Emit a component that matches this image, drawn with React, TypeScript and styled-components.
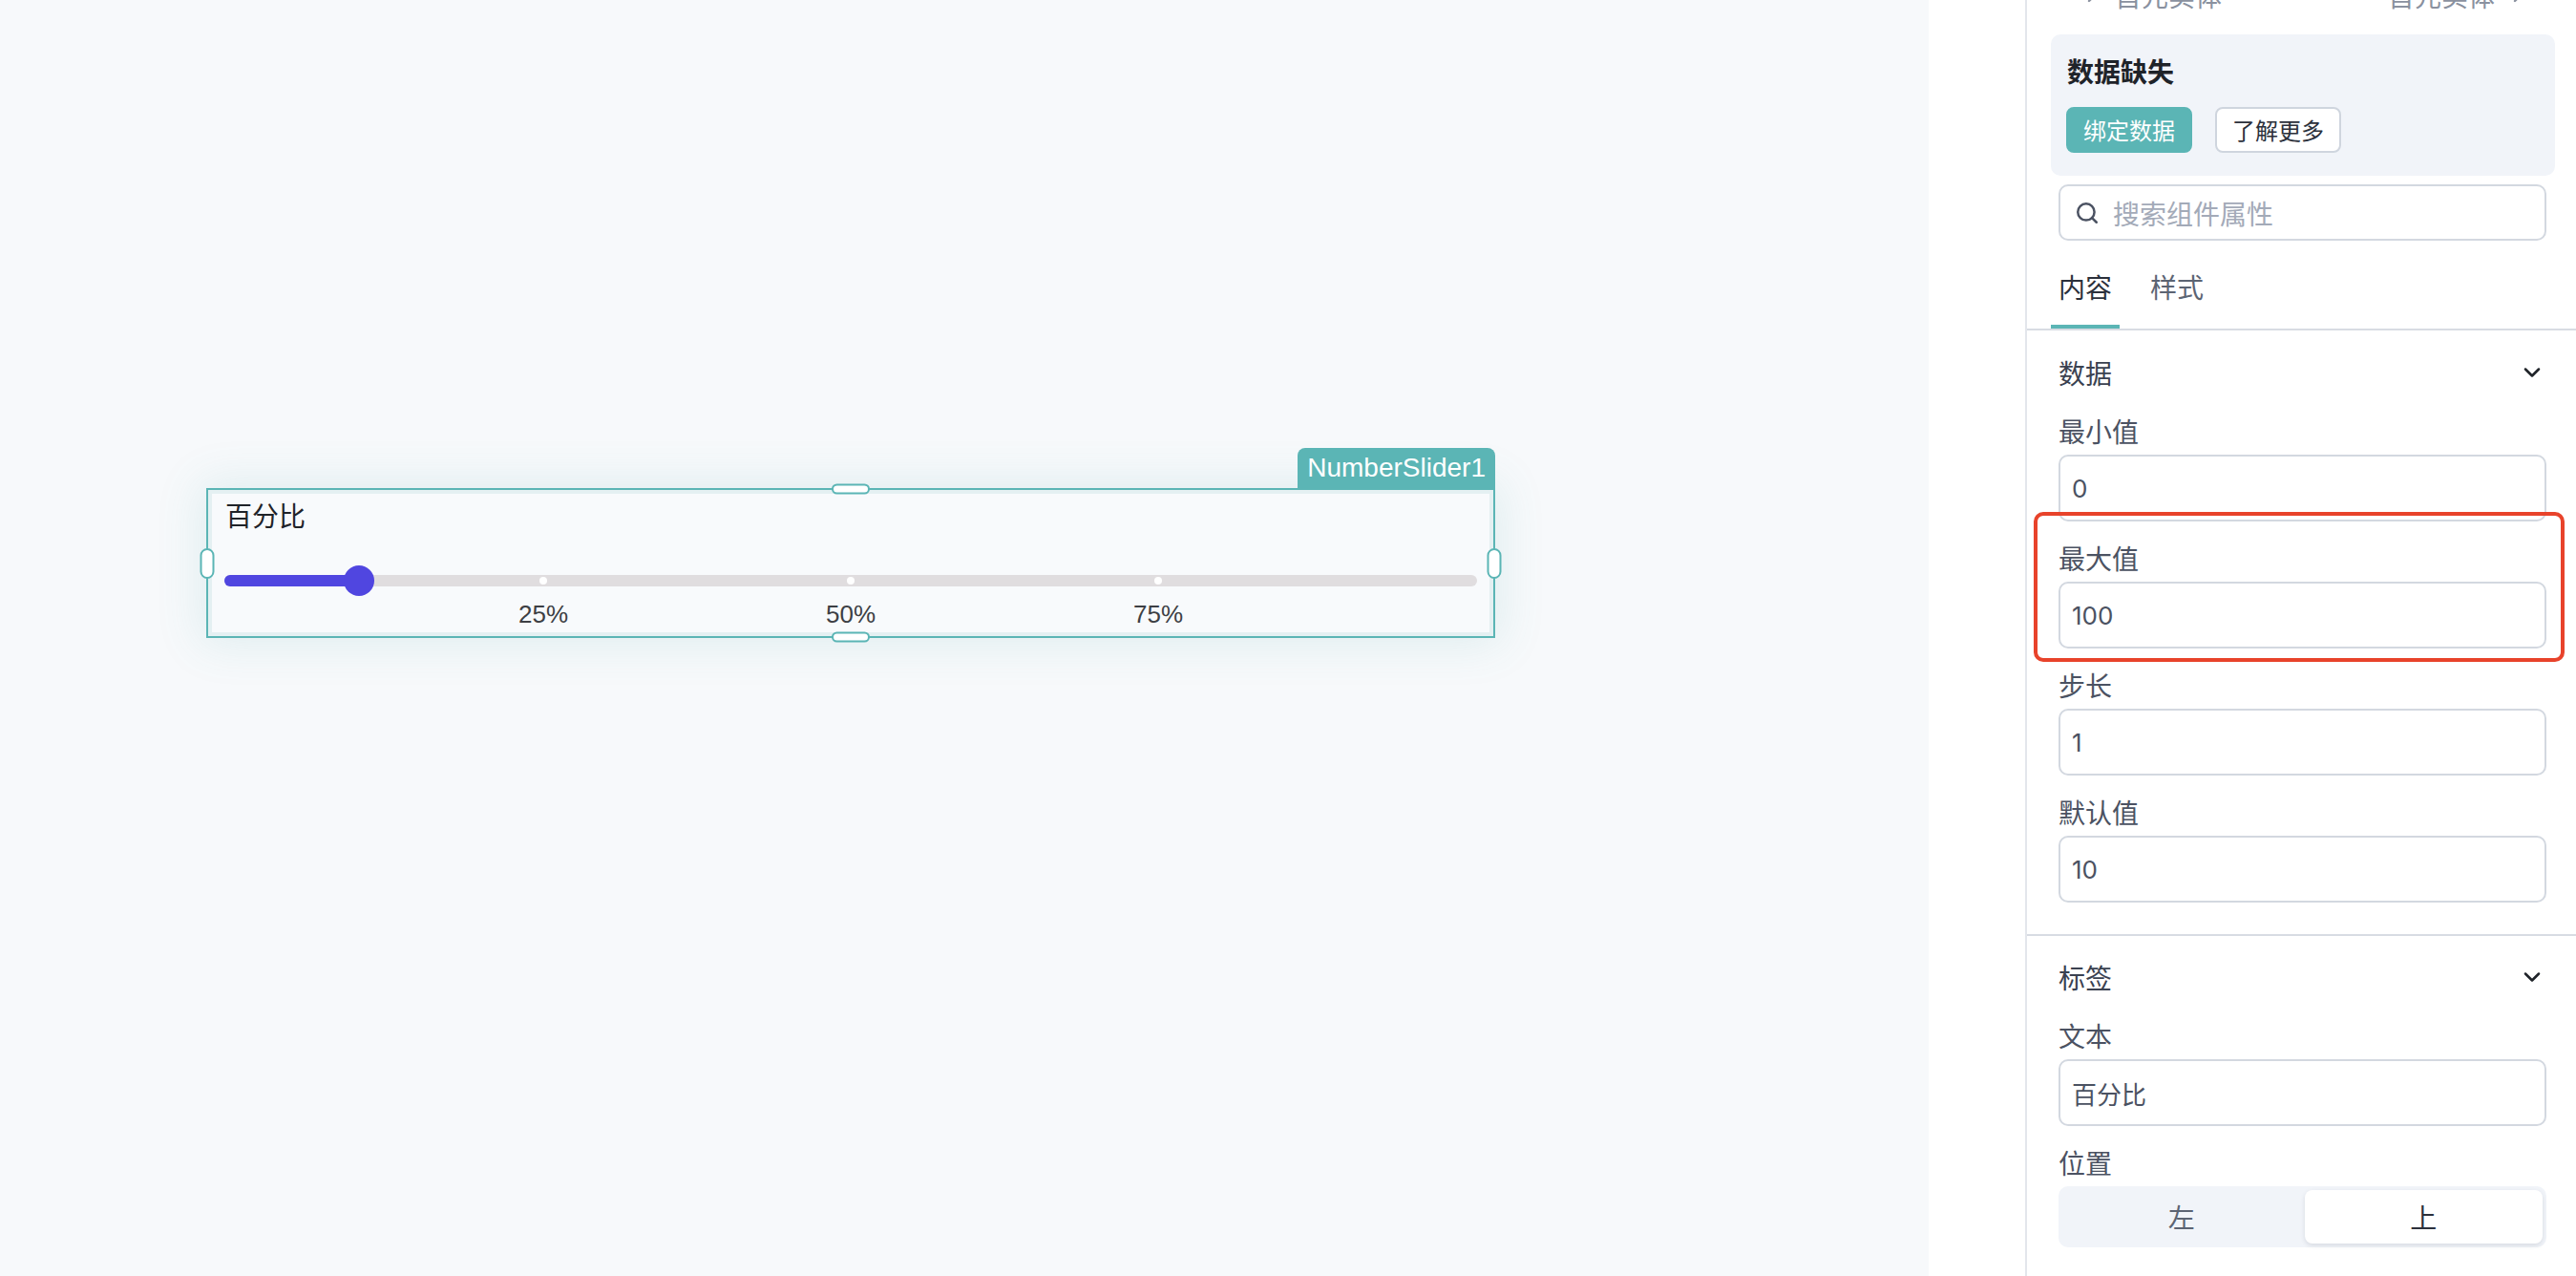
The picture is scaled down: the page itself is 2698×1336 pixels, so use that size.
import styled, { createGlobalStyle } from "styled-components";
import { Search, ChevronDown, ChevronRight } from "lucide-react";

const GlobalStyle = createGlobalStyle`
  html, body { margin: 0; padding: 0; height: 100%; overflow: hidden; }
  body {
    font-family: "Noto Sans CJK SC", "Noto Sans", sans-serif;
    background: #ffffff;
    color: #4b5262;
  }
  #root { height: 100%; }
  * { box-sizing: border-box; }
`;

const TEAL = "#5bb5b5";
const BORDER = "#d3d8e0";

const Shell = styled.div`
  position: relative;
  display: flex;
  width: 100%;
  height: 100%;
`;

/* ---------- canvas ---------- */

const Canvas = styled.main`
  position: relative;
  flex: 0 0 2020px;
  background: #f7f9fb;
`;

const Gutter = styled.div`
  flex: 0 0 101px;
  background: #ffffff;
`;

const Selection = styled.div`
  position: absolute;
  left: 216px;
  top: 511px;
  width: 1350px;
  height: 157px;
  padding: 4px;
  border: 2px solid ${TEAL};
  background: rgba(91, 181, 181, 0.12);
  box-shadow: 0 0 44px 6px rgba(70, 160, 160, 0.13);
`;

const Tag = styled.div`
  position: absolute;
  right: -2px;
  bottom: calc(100% + 2px);
  height: 42px;
  padding: 0 10px;
  border-radius: 8px 8px 0 0;
  background: ${TEAL};
  color: #ffffff;
  font-family: "Liberation Sans", Arial, sans-serif;
  font-size: 28px;
  line-height: 42px;
  white-space: nowrap;
`;

const Handle = styled.span<{ $side: "top" | "bottom" | "left" | "right" }>`
  position: absolute;
  background: #ffffff;
  border: 2px solid ${TEAL};
  border-radius: 8px;
  transform: translate(-50%, -50%);
  ${({ $side }) =>
    $side === "left" || $side === "right"
      ? `width: 15px; height: 32px; top: 50%; left: ${$side === "left" ? "-1px" : "calc(100% + 1px)"};`
      : `width: 40px; height: 11px; left: 50%; top: ${$side === "top" ? "-1px" : "calc(100% + 1px)"};`}
`;

const Widget = styled.div`
  height: 100%;
  padding: 4px 13px 0;
  background: #f8fafc;
`;

const WidgetLabel = styled.div`
  padding-left: 1px;
  font-size: 28px;
  line-height: 36px;
  color: #1f2329;
`;

const SliderArea = styled.div`
  position: relative;
  height: 32px;
  margin-top: 35px;
`;

const Track = styled.div`
  position: absolute;
  left: 0;
  right: 0;
  top: 10px;
  height: 12px;
  border-radius: 6px;
  background: #e0dddf;
`;

const Fill = styled.div`
  position: absolute;
  left: 0;
  top: 10px;
  height: 12px;
  border-radius: 6px;
  background: #5046e0;
`;

const Dot = styled.span`
  position: absolute;
  top: 12px;
  width: 8px;
  height: 8px;
  border-radius: 50%;
  background: #ffffff;
  transform: translateX(-50%);
`;

const Thumb = styled.span`
  position: absolute;
  top: 0;
  width: 32px;
  height: 32px;
  border-radius: 50%;
  background: #5046e0;
  transform: translateX(-50%);
`;

const Marks = styled.div`
  position: relative;
  height: 30px;
  margin-top: 4px;
`;

const Mark = styled.span`
  position: absolute;
  top: 0;
  transform: translateX(-50%);
  font-family: "Liberation Sans", Arial, sans-serif;
  font-size: 26px;
  line-height: 30px;
  color: #3d3f44;
`;

const INSET = 12;
const at = (p: number) => `calc(${INSET}px + (100% - ${INSET * 2}px) * ${p})`;

const SliderCard = () => {
  const value = 10;
  const ticks = [25, 50, 75];
  return (
    <Selection>
      <Tag>NumberSlider1</Tag>
      <Handle $side="top" />
      <Handle $side="bottom" />
      <Handle $side="left" />
      <Handle $side="right" />
      <Widget>
        <WidgetLabel>百分比</WidgetLabel>
        <SliderArea>
          <Track />
          <Fill style={{ width: at(value / 100) }} />
          {ticks.map((t) => (
            <Dot key={t} style={{ left: at(t / 100) }} />
          ))}
          <Thumb style={{ left: at(value / 100) }} />
        </SliderArea>
        <Marks>
          {ticks.map((t) => (
            <Mark key={t} style={{ left: at(t / 100) }}>
              {t}%
            </Mark>
          ))}
        </Marks>
      </Widget>
    </Selection>
  );
};

/* ---------- property panel ---------- */

const Panel = styled.aside`
  flex: 1;
  min-width: 0;
  border-left: 2px solid #e3e6ec;
  background: #ffffff;
  overflow: hidden;
`;

const Crumbs = styled.div`
  display: flex;
  justify-content: space-between;
  align-items: center;
  height: 36px;
  margin-top: -23px;
  padding: 0 49px 0 56px;
  font-size: 28px;
  line-height: 36px;
  color: #8a919f;
`;

const Crumb = styled.span`
  display: flex;
  align-items: center;
  gap: 12px;
`;

const Notice = styled.div`
  margin: 23px 22px 0 25px;
  padding: 20px 16px 24px;
  border-radius: 10px;
  background: #f1f4f9;
`;

const NoticeTitle = styled.div`
  padding-left: 1px;
  font-size: 28px;
  line-height: 36px;
  font-weight: 600;
  color: #1f2329;
`;

const ButtonRow = styled.div`
  display: flex;
  gap: 24px;
  margin-top: 20px;
`;

const Button = styled.button<{ $primary?: boolean }>`
  height: 48px;
  padding: 0 16px;
  border-radius: 8px;
  border: 2px solid ${({ $primary }) => ($primary ? TEAL : "#cfd5de")};
  background: ${({ $primary }) => ($primary ? TEAL : "#ffffff")};
  color: ${({ $primary }) => ($primary ? "#ffffff" : "#2b303b")};
  font-family: "Noto Sans CJK SC", sans-serif;
  font-size: 24px;
  line-height: 44px;
`;

const SearchBox = styled.div`
  display: flex;
  align-items: center;
  gap: 14px;
  height: 59px;
  margin: 9px 31px 0 33px;
  padding-left: 15px;
  border: 2px solid ${BORDER};
  border-radius: 10px;
  color: #4b5262;
`;

const Placeholder = styled.span`
  font-size: 28px;
  line-height: 36px;
  color: #a3aab8;
`;

const Tabs = styled.div`
  display: flex;
  gap: 24px;
  padding: 30px 0 0 25px;
  border-bottom: 2px solid #d8dce3;
`;

const Tab = styled.div<{ $active?: boolean }>`
  width: 72px;
  padding-bottom: 22px;
  text-align: center;
  font-size: 28px;
  line-height: 36px;
  color: ${({ $active }) => ($active ? "#2b303b" : "#5c6473")};
  border-bottom: 4px solid ${({ $active }) => ($active ? TEAL : "transparent")};
`;

const Section = styled.section<{ $divider?: boolean; $top: number }>`
  padding: ${({ $top }) => $top}px 31px 33px 33px;
  border-bottom: ${({ $divider }) => ($divider ? "2px solid #d8dce3" : "none")};
`;

const SectionHead = styled.div`
  display: flex;
  justify-content: space-between;
  align-items: center;
  height: 36px;
  margin-bottom: 25px;
  font-size: 28px;
  line-height: 36px;
  color: #3a4150;
  svg { margin-right: 1px; }
`;

const Field = styled.div`
  margin-top: 20px;
`;

const Label = styled.div`
  margin-bottom: 7px;
  font-size: 28px;
  line-height: 36px;
  color: #4b5262;
`;

const TextInput = styled.input`
  display: block;
  width: 100%;
  height: 70px;
  padding: 0 12px;
  border: 2px solid ${BORDER};
  border-radius: 10px;
  background: #ffffff;
  outline: none;
  font-family: "Inter", "Noto Sans CJK SC", sans-serif;
  font-size: 26px;
  color: #4b5262;
`;

const Segmented = styled.div`
  display: grid;
  grid-template-columns: 1fr 1fr;
  gap: 4px;
  height: 64px;
  padding: 4px;
  border-radius: 10px;
  background: #f1f4f9;
`;

const Segment = styled.div<{ $active?: boolean }>`
  display: flex;
  align-items: center;
  justify-content: center;
  border-radius: 8px;
  font-size: 28px;
  color: ${({ $active }) => ($active ? "#2b303b" : "#5c6473")};
  background: ${({ $active }) => ($active ? "#ffffff" : "transparent")};
  box-shadow: ${({ $active }) => ($active ? "0 2px 5px rgba(30, 40, 60, 0.12)" : "none")};
`;

const Annotation = styled.div`
  position: absolute;
  left: 2130px;
  top: 536px;
  width: 556px;
  height: 157px;
  border: 4px solid #e8432b;
  border-radius: 10px;
  pointer-events: none;
`;

const dataFields = [
  { label: "最小值", value: "0" },
  { label: "最大值", value: "100" },
  { label: "步长", value: "1" },
  { label: "默认值", value: "10" },
];

const Chevron = () => <ChevronDown size={28} strokeWidth={2.2} color="#1f2329" />;

export default function App() {
  return (
    <>
      <GlobalStyle />
      <Shell>
        <Canvas>
          <SliderCard />
        </Canvas>
        <Gutter />
        <Panel>
          <Crumbs>
            <Crumb>
              <ChevronRight size={24} strokeWidth={2.4} />
              首元实体
            </Crumb>
            <Crumb>
              首元实体
              <ChevronRight size={24} strokeWidth={2.4} />
            </Crumb>
          </Crumbs>

          <Notice>
            <NoticeTitle>数据缺失</NoticeTitle>
            <ButtonRow>
              <Button $primary>绑定数据</Button>
              <Button>了解更多</Button>
            </ButtonRow>
          </Notice>

          <SearchBox>
            <Search size={26} strokeWidth={2.3} />
            <Placeholder>搜索组件属性</Placeholder>
          </SearchBox>

          <Tabs>
            <Tab $active>内容</Tab>
            <Tab>样式</Tab>
          </Tabs>

          <Section $divider $top={26}>
            <SectionHead>
              数据
              <Chevron />
            </SectionHead>
            {dataFields.map((f) => (
              <Field key={f.label}>
                <Label>{f.label}</Label>
                <TextInput readOnly value={f.value} />
              </Field>
            ))}
          </Section>

          <Section $top={25}>
            <SectionHead>
              标签
              <Chevron />
            </SectionHead>
            <Field>
              <Label>文本</Label>
              <TextInput readOnly value="百分比" />
            </Field>
            <Field>
              <Label>位置</Label>
              <Segmented>
                <Segment>左</Segment>
                <Segment $active>上</Segment>
              </Segmented>
            </Field>
          </Section>
        </Panel>
        <Annotation />
      </Shell>
    </>
  );
}
